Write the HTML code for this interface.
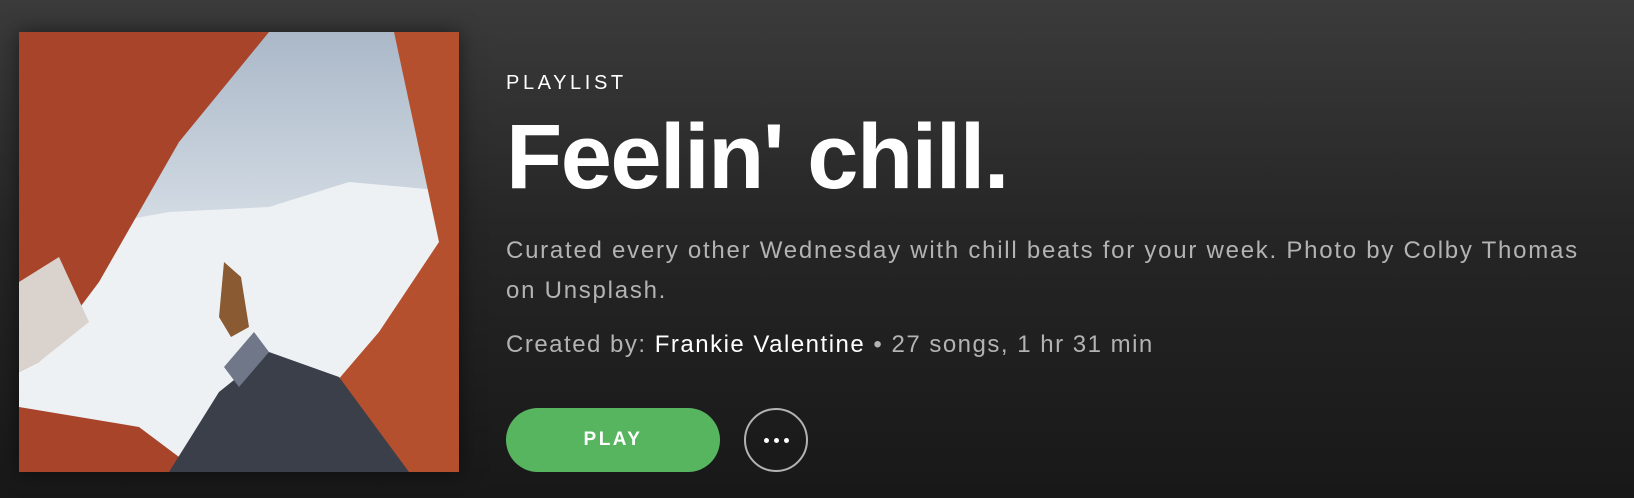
<!DOCTYPE html>
<html><head><style>
html,body{margin:0;padding:0;}
body{width:1634px;height:498px;overflow:hidden;background:linear-gradient(#3b3b3b 0%,#262626 45%,#181818 100%);font-family:"Liberation Sans",sans-serif;position:relative;}
.art{position:absolute;left:19px;top:32px;width:440px;height:440px;box-shadow:0 0 20px rgba(0,0,0,.5);}
.t{position:absolute;left:506px;white-space:nowrap;}
.pl{top:72px;font-size:20px;letter-spacing:3.6px;color:#fff;}
.title{top:105px;font-size:92px;font-weight:bold;color:#fff;letter-spacing:-1.5px;}
.desc{top:231px;font-size:24px;line-height:40px;color:#b3b3b3;letter-spacing:1.75px;}
.cr{top:331px;font-size:24px;color:#b3b3b3;letter-spacing:1.5px;}
.cr b{font-weight:normal;color:#fff;}
.play{position:absolute;left:506px;top:408px;width:214px;height:64px;border-radius:32px;background:#57b560;color:#fff;font-weight:bold;font-size:19px;letter-spacing:2.5px;text-align:center;line-height:64px;}
.more{position:absolute;left:744px;top:408px;width:60px;height:60px;border:2px solid #b3b3b3;border-radius:50%;}
.more i{position:absolute;top:28px;width:5px;height:5px;border-radius:50%;background:#fff;}
</style></head><body>
<svg class="art" viewBox="0 0 440 440" xmlns="http://www.w3.org/2000/svg">
<defs>
<linearGradient id="sky" x1="0" y1="0" x2="0" y2="1"><stop offset="0" stop-color="#aab8c8"/><stop offset="0.45" stop-color="#d5dde5"/><stop offset="1" stop-color="#eef1f4"/></linearGradient>
</defs>
<rect width="440" height="440" fill="url(#sky)"/>
<path d="M40 200 L150 180 L250 175 L330 150 L440 160 L440 440 L0 440 L0 260Z" fill="#eef1f4"/>
<path d="M0 0 L250 0 L160 110 L80 250 L20 330 L0 340Z" fill="#a8442a"/>
<path d="M0 250 L40 225 L70 290 L20 330 L0 340Z" fill="#d9d2cd"/>
<path d="M375 0 L440 0 L440 440 L320 440 L300 370 L360 300 L420 210Z" fill="#b5502e"/>
<path d="M0 375 L120 395 L180 440 L0 440Z" fill="#a8442a"/>
<path d="M150 440 L200 360 L250 320 L320 345 L390 440Z" fill="#3b3f4a"/>
<path d="M205 335 L235 300 L250 320 L220 355Z" fill="#6f7788"/>
<path d="M205 230 L222 245 L230 295 L212 305 L200 285Z" fill="#8a5a32"/>
</svg>
<div class="t pl">PLAYLIST</div>
<div class="t title">Feelin' chill.</div>
<div class="t desc">Curated every other Wednesday with chill beats for your week. Photo by Colby Thomas<br>on Unsplash.</div>
<div class="t cr">Created by: <b>Frankie Valentine</b> • 27 songs, 1 hr 31 min</div>
<div class="play">PLAY</div>
<div class="more"><i style="left:18px"></i><i style="left:28px"></i><i style="left:38px"></i></div>
</body></html>
